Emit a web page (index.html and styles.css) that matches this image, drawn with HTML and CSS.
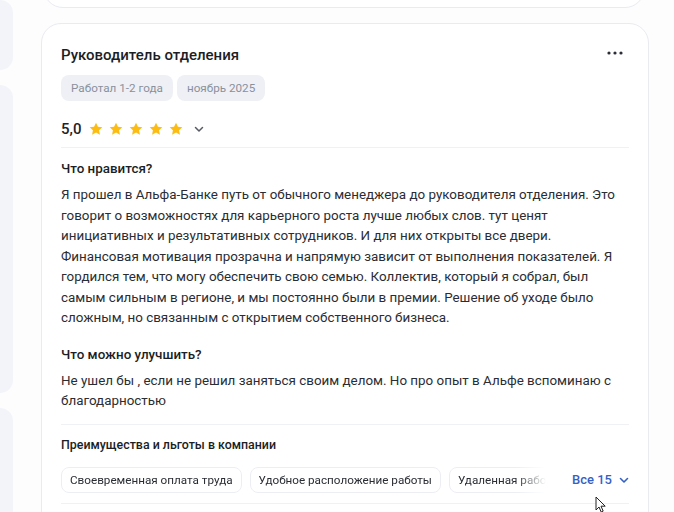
FILE: index.html
```html
<!DOCTYPE html>
<html lang="ru">
<head>
    <meta charset="UTF-8">
    <title>Отзыв</title>
    <link rel="stylesheet" href="styles.css">
</head>
<body>
    <!-- левая колонка -->
    <div class="side">
        <div class="side-block first"></div>
        <div class="side-block second"></div>
        <div class="side-block third"></div>
    </div>

    <div class="feed">
        <!-- хвост предыдущего отзыва -->
        <div class="card prev"></div>

        <div class="card review">
            <div class="review-head">
                <h2 class="review-title">Руководитель отделения</h2>
                <button class="more" aria-label="Ещё">
                    <svg width="16" height="4" viewBox="0 0 16 4"><circle cx="2" cy="2" r="1.6"/><circle cx="8" cy="2" r="1.6"/><circle cx="14" cy="2" r="1.6"/></svg>
                </button>
            </div>

            <div class="tags">
                <span class="tag">Работал 1-2 года</span>
                <span class="tag">ноябрь 2025</span>
            </div>

            <div class="rating">
                <span class="rating-value">5,0</span>
                <div class="stars">
                    <svg viewBox="0 0 24 24"><path d="M12 2.5l2.9 6.1 6.6.8-4.9 4.6 1.3 6.6L12 17.3l-5.9 3.3 1.3-6.6-4.9-4.6 6.6-.8z"/></svg>
                    <svg viewBox="0 0 24 24"><path d="M12 2.5l2.9 6.1 6.6.8-4.9 4.6 1.3 6.6L12 17.3l-5.9 3.3 1.3-6.6-4.9-4.6 6.6-.8z"/></svg>
                    <svg viewBox="0 0 24 24"><path d="M12 2.5l2.9 6.1 6.6.8-4.9 4.6 1.3 6.6L12 17.3l-5.9 3.3 1.3-6.6-4.9-4.6 6.6-.8z"/></svg>
                    <svg viewBox="0 0 24 24"><path d="M12 2.5l2.9 6.1 6.6.8-4.9 4.6 1.3 6.6L12 17.3l-5.9 3.3 1.3-6.6-4.9-4.6 6.6-.8z"/></svg>
                    <svg viewBox="0 0 24 24"><path d="M12 2.5l2.9 6.1 6.6.8-4.9 4.6 1.3 6.6L12 17.3l-5.9 3.3 1.3-6.6-4.9-4.6 6.6-.8z"/></svg>
                </div>
                <svg class="chevron" width="12" height="12" viewBox="0 0 12 12"><path d="M2.5 4.5L6 8l3.5-3.5"/></svg>
            </div>

            <div class="section">
                <h3 class="section-title">Что нравится?</h3>
                <p class="section-text">Я прошел в Альфа-Банке путь от обычного менеджера до руководителя отделения. Это говорит о возможностях для карьерного роста лучше любых слов. тут ценят инициативных и результативных сотрудников. И для них открыты все двери. Финансовая мотивация прозрачна и напрямую зависит от выполнения показателей. Я гордился тем, что могу обеспечить свою семью. Коллектив, который я собрал, был самым сильным в регионе, и мы постоянно были в премии. Решение об уходе было сложным, но связанным с открытием собственного бизнеса.</p>

                <h3 class="section-title">Что можно улучшить?</h3>
                <p class="section-text">Не ушел бы , если не решил заняться своим делом. Но про опыт в Альфе вспоминаю с благодарностью</p>
            </div>

            <div class="benefits">
                <h4 class="benefits-title">Преимущества и льготы в компании</h4>
                <div class="benefits-row">
                    <div class="chips">
                        <span class="chip">Своевременная оплата труда</span>
                        <span class="chip">Удобное расположение работы</span>
                        <span class="chip">Удаленная работа</span>
                    </div>
                    <button class="show-all">Все 15
                        <svg width="12" height="12" viewBox="0 0 12 12"><path d="M2.5 4.5L6 8l3.5-3.5"/></svg>
                    </button>
                    <!-- курсор мыши -->
                    <svg class="cursor" width="12" height="17" viewBox="0 0 12 17"><path d="M1 1v13l3-3 2.2 5 2-0.9L6 10.2h4.2z"/></svg>
                </div>
            </div>
        </div>
    </div>
</body>
</html>
```

FILE: styles.css
```css
body {
    display: flex;
    margin: 0;
    height: 512px;
    overflow: hidden;
    background-color: #fdfdfe;
    font-family: Roboto, "Liberation Sans", sans-serif;
    color: #1f2229;
}

/* левая колонка */
.side {
    display: flex;
    flex-direction: column;
    gap: 15px;
    width: 13px;
    flex-shrink: 0;
}

.side-block {
    background: #f3f4f9;
    border-radius: 0 14px 14px 0;
}

.side-block.first {
    height: 70px;
}

.side-block.second {
    height: 308px;
}

.side-block.third {
    flex: 1;
    border-radius: 0 14px 0 0;
}

/* лента отзывов */
.feed {
    display: flex;
    flex-direction: column;
    gap: 15px;
    margin-left: 28px;
    width: 608px;
}

.card {
    background: #fff;
    border: 1px solid #e9ebf1;
    border-radius: 20px;
    box-sizing: border-box;
    flex-shrink: 0;
}

.card.prev {
    height: 40px;
    margin-top: -32px;
    margin-left: 2px;
    margin-right: 4px;
}

.card.review {
    padding: 18px 19px 40px 19px;
}

.review-head {
    display: flex;
    justify-content: space-between;
    align-items: center;
}

.review-title {
    margin: 0;
    font-size: 15px;
    font-weight: 500;
    line-height: 26px;
    color: #1b1e25;
}

.more {
    border: 0;
    background: none;
    padding: 0;
    margin-right: 6px;
    margin-top: -4px;
    display: flex;
    fill: #2a2d35;
}

/* теги */
.tags {
    display: flex;
    gap: 4px;
    margin-top: 7px;
}

.tag {
    background: #eef0f5;
    color: #8a909c;
    font-size: 11.7px;
    line-height: 26px;
    padding: 0 10px;
    border-radius: 8px;
}

/* рейтинг */
.rating {
    display: flex;
    align-items: center;
    height: 26px;
    margin-top: 15px;
    padding-bottom: 5px;
    border-bottom: 1px solid #f0f1f5;
}

.rating-value {
    font-size: 15px;
    font-weight: 500;
    margin-right: 7px;
}

.stars {
    display: flex;
    gap: 4px;
}

.stars svg {
    width: 16px;
    height: 16px;
    fill: #fdbc12;
}

.chevron {
    margin-left: 9px;
    fill: none;
    stroke: #555a64;
    stroke-width: 1.5;
    stroke-linecap: round;
    stroke-linejoin: round;
}

/* текст отзыва */
.section {
    padding-top: 11px;
    padding-bottom: 12px;
    border-bottom: 1px solid #f0f1f5;
}

.section-title {
    margin: 0;
    font-size: 13.4px;
    font-weight: 500;
    line-height: 20px;
    color: #1b1e25;
}

.section-text {
    max-width: 558px;
    margin: 6px 0 16px 0;
    font-size: 13.4px;
    line-height: 20.5px;
    color: #2a2d33;
}

.section-text:last-child {
    margin-bottom: 0;
}

/* льготы */
.benefits {
    padding-top: 11px;
    padding-bottom: 10px;
    border-bottom: 1px solid #f0f1f5;
}

.benefits-title {
    margin: 0;
    font-size: 12.4px;
    font-weight: 500;
    line-height: 18px;
    color: #1b1e25;
}

.benefits-row {
    position: relative;
    display: flex;
    align-items: center;
    margin-top: 13px;
}

.chips {
    display: flex;
    gap: 8px;
    width: 485px;
    flex-shrink: 0;
    overflow: hidden;
    -webkit-mask-image: linear-gradient(to right, #000 455px, transparent 485px);
    mask-image: linear-gradient(to right, #000 455px, transparent 485px);
}

.chip {
    flex-shrink: 0;
    border: 1px solid #eceef3;
    border-radius: 8px;
    padding: 0 8px;
    font-size: 11.7px;
    line-height: 24px;
    color: #2a2d33;
    white-space: nowrap;
}

.show-all {
    display: flex;
    align-items: center;
    gap: 6px;
    margin-left: 26px;
    border: 0;
    background: none;
    padding: 0;
    font-family: inherit;
    font-size: 13px;
    font-weight: 500;
    color: #3661c4;
    white-space: nowrap;
}

.show-all svg {
    fill: none;
    stroke: #3661c4;
    stroke-width: 1.6;
    stroke-linecap: round;
    stroke-linejoin: round;
}

.cursor {
    position: absolute;
    left: 534px;
    top: 29px;
    fill: #fff;
    stroke: #222;
    stroke-width: 1;
}
```
